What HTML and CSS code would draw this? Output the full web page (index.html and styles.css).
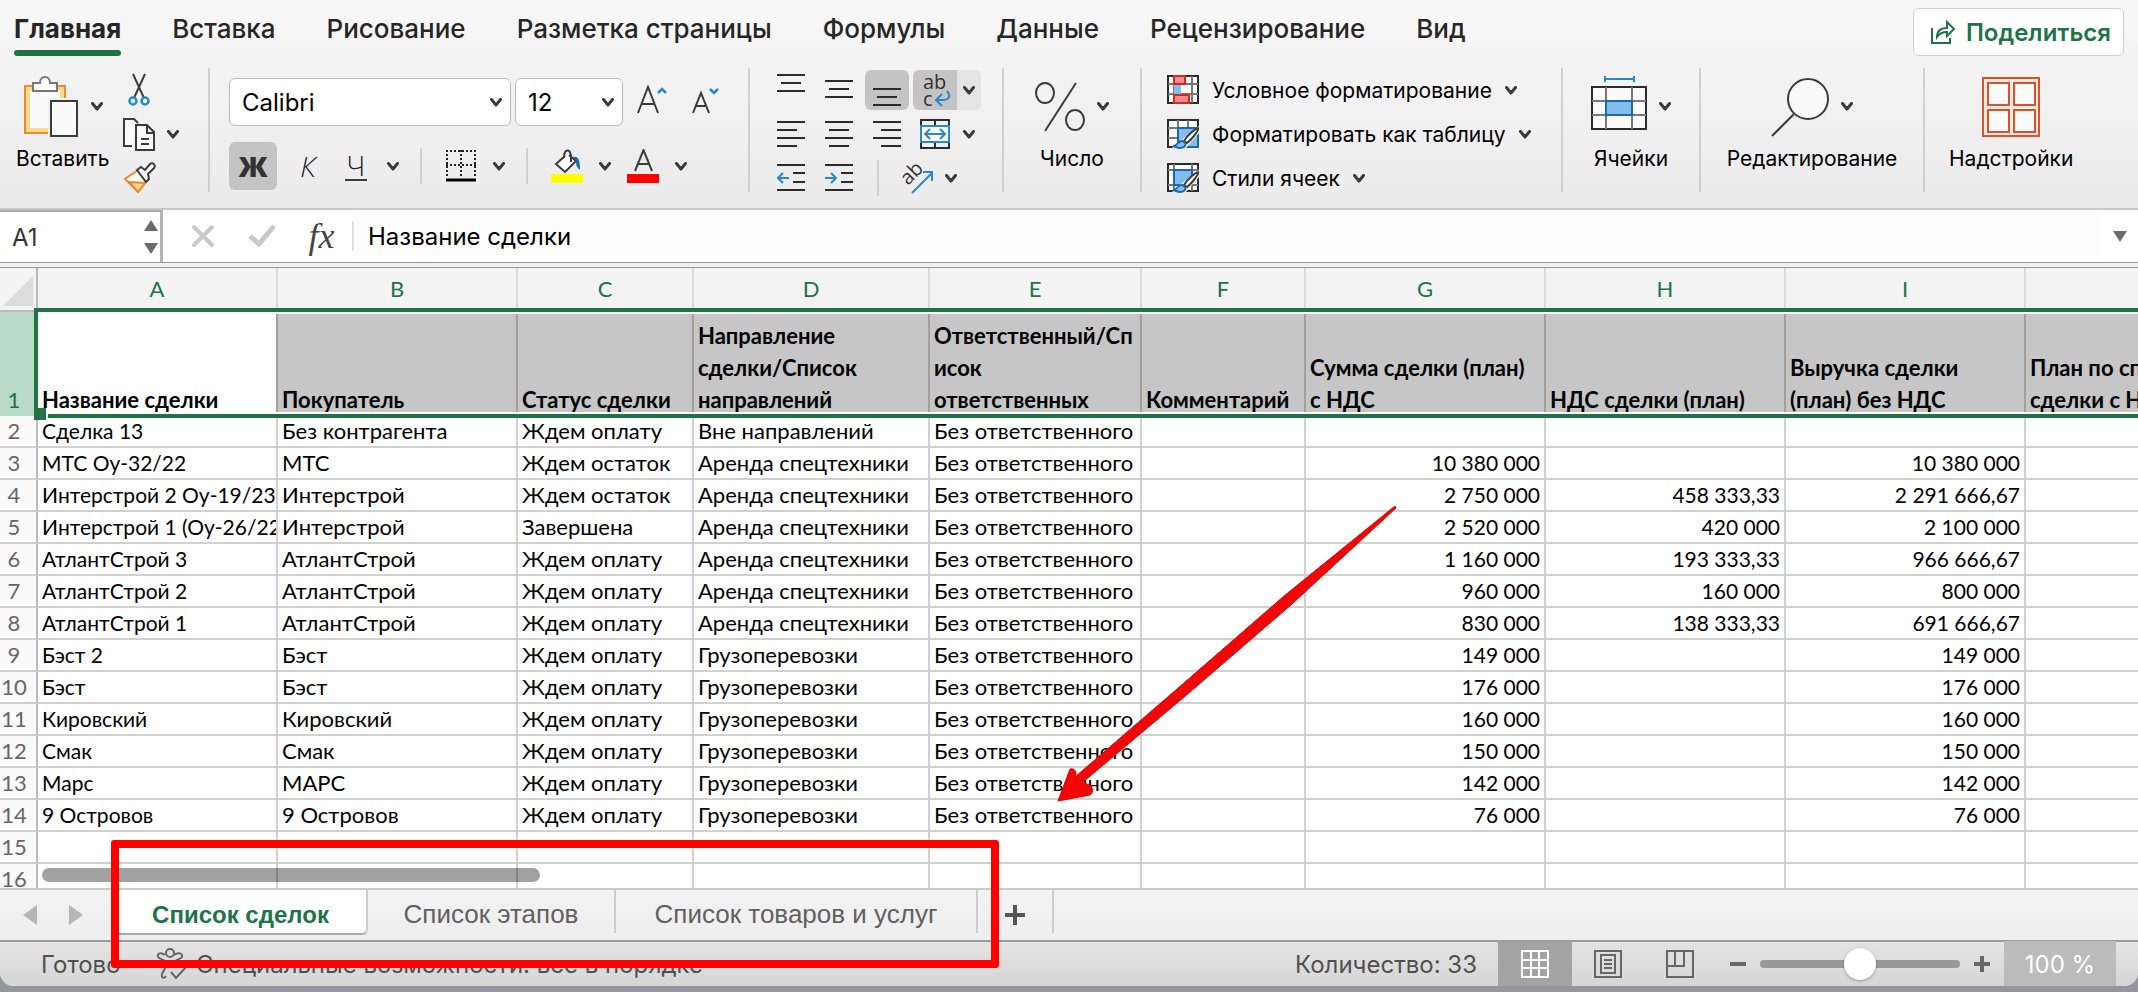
FILE: index.html
```html
<!DOCTYPE html>
<html lang="ru">
<head>
    <meta charset="UTF-8">
    <meta name="viewport" content="width=device-width, initial-scale=1.0">
    <title>Список сделок</title>
    <link rel="stylesheet" href="styles.css">
</head>
<body>
    <svg class="defs" aria-hidden="true">
        <symbol id="chevron" viewBox="0 0 12 9"><path d="M1.500 1.500 6 7l4.500-5.500" fill="none" stroke="#3b3b3b" stroke-width="3" stroke-linecap="round" stroke-linejoin="round"/></symbol>
    </svg>

    <div class="window">
        <nav class="menu">
            <a class="menu-item active" href="#">Главная</a>
            <a class="menu-item" href="#">Вставка</a>
            <a class="menu-item" href="#">Рисование</a>
            <a class="menu-item" href="#">Разметка страницы</a>
            <a class="menu-item" href="#">Формулы</a>
            <a class="menu-item" href="#">Данные</a>
            <a class="menu-item" href="#">Рецензирование</a>
            <a class="menu-item" href="#">Вид</a>
            <button class="share-btn">
                <svg width="26" height="26" viewBox="0 0 26 26" fill="none" stroke="#217346" stroke-width="2"><path d="M2 9v15h18v-5M7 18c0-6 4-9 10-9V3l7 7-7 7v-4c-5 0-8 2-10 5z"/></svg>
                Поделиться
            </button>
        </nav>

        <div class="ribbon">
            <div class="group group-clipboard">
                <button class="big-btn">
                    <span class="big-icon">
                        <svg width="56" height="62" viewBox="0 0 56 62">
                            <path d="M2 10h40v47H2z" fill="#fbd98d" stroke="#e88b35" stroke-width="2"/>
                            <path d="M7 15h30v37H7z" fill="#fafafa"/>
                            <path d="M25 22h31v40H25z" fill="#f1f1f1"/>
                            <path d="M10 15V7h7c0-8 10-8 10 0h7v8z" fill="#fff" stroke="#777" stroke-width="2"/>
                            <path d="M28 25h26v35H28z" fill="#fafafa" stroke="#3b3b3b" stroke-width="2"/>
                        </svg>
                        <svg class="chevron"><use href="#chevron"/></svg>
                    </span>
                    Вставить
                </button>
                <div class="rows">
                    <div class="row">
                        <button class="tool" title="Вырезать">
                            <svg width="34" height="34" viewBox="0 0 34 34" fill="none" stroke-width="2"><path d="M11 1l11 24M23 1L12 25" stroke="#3b3b3b"/><circle cx="11" cy="28" r="3.500" stroke="#2b88c8" stroke-width="2.500"/><circle cx="23" cy="28" r="3.500" stroke="#2b88c8" stroke-width="2.500"/></svg>
                        </button>
                    </div>
                    <div class="row">
                        <button class="tool" title="Копировать">
                            <svg width="34" height="34" viewBox="0 0 34 34" fill="#fafafa" stroke="#3b3b3b" stroke-width="2"><path d="M10 29H2V2h10l4 4"/><path d="M14 8h11l7 7v18H14zM25 8v8h7M19 22h8M19 27h8"/></svg>
                        </button>
                        <svg class="chevron"><use href="#chevron"/></svg>
                    </div>
                    <div class="row">
                        <button class="tool" title="Формат по образцу">
                            <svg width="34" height="34" viewBox="0 0 34 34" stroke-width="2"><path d="M16 9L3 18l13 13 10-13z" fill="#fff" stroke="#e88b35"/><path d="M7 21l16 1-7 9z" fill="#fbd98d" stroke="#e88b35"/><path d="M15 9l4-3 4 3 5-6c3-2 6 1 4 4l-6 6 1 5-3 3z" fill="#fff" stroke="#3b3b3b"/></svg>
                        </button>
                    </div>
                </div>
            </div>

            <div class="group group-font">
                <div class="font-row">
                    <span class="select select-font"><select aria-label="Шрифт"><option>Calibri</option></select><svg class="chevron"><use href="#chevron"/></svg></span>
                    <span class="select select-size"><select aria-label="Размер шрифта"><option>12</option></select><svg class="chevron"><use href="#chevron"/></svg></span>
                    <button class="size-btn" title="Увеличить размер шрифта">
                        <svg width="30" height="34" viewBox="0 0 30 34" fill="none" stroke-width="2"><path d="M1 28L11 2l10 26M5 19h12" stroke="#3b3b3b"/><path d="M21 8l4-4 4 4" stroke="#2b88c8" stroke-width="2.500"/></svg>
                    </button>
                    <button class="size-btn" title="Уменьшить размер шрифта">
                        <svg width="30" height="34" viewBox="0 0 30 34" fill="none" stroke-width="2"><path d="M2 28l8-20 8 20M5 21h10" stroke="#3b3b3b"/><path d="M19 4l4 4 4-4" stroke="#2b88c8" stroke-width="2.500"/></svg>
                    </button>
                </div>
                <div class="font-row font-style">
                    <button class="letter-btn bold-btn">Ж</button>
                    <button class="letter-btn italic-btn">К</button>
                    <button class="letter-btn"><span class="underlined">Ч</span></button>
                    <svg class="chevron"><use href="#chevron"/></svg>
                    <span class="divider"></span>
                    <button class="tool" title="Границы">
                        <svg width="30" height="32" viewBox="0 0 30 32" fill="none" stroke="#222" stroke-width="2"><path d="M0 1h30M0 15h30M1 0v28M15 0v28M29 0v28" stroke-dasharray="2 2"/><path d="M0 30h30" stroke="#000" stroke-width="3"/></svg>
                    </button>
                    <svg class="chevron"><use href="#chevron"/></svg>
                    <span class="divider"></span>
                    <button class="tool" title="Цвет заливки">
                        <svg width="32" height="34" viewBox="0 0 32 34"><path d="M0 25h32v9H0z" fill="#ff0"/><path d="M14 7L5 15l9 8 11-11-7-6" fill="#fafafa" stroke="#3b3b3b" stroke-width="2"/><path d="M13 9c0-10 7-10 7 0v4" fill="none" stroke="#3b3b3b" stroke-width="2"/><path d="M22 8c5-1 7 2 7 13-3-2-4-5-4-8z" fill="#1b68ad"/></svg>
                    </button>
                    <svg class="chevron"><use href="#chevron"/></svg>
                    <button class="tool" title="Цвет текста">
                        <svg width="32" height="34" viewBox="0 0 32 34"><path d="M0 25h32v9H0z" fill="red"/><path d="M8 22l8.500-21L25 22M11 15h11" fill="none" stroke="#3b3b3b" stroke-width="2"/></svg>
                    </button>
                    <svg class="chevron"><use href="#chevron"/></svg>
                </div>
            </div>

            <div class="group group-align">
                <div class="rows">
                    <div class="row">
                        <button class="align-btn" title="По верхнему краю"><svg width="28" height="36" viewBox="0 0 28 36" stroke="#2b2b2b" stroke-width="2"><path d="M0 3h28M4 11h20M0 19h28"/></svg></button>
                        <button class="align-btn" title="По середине"><svg width="28" height="36" viewBox="0 0 28 36" stroke="#2b2b2b" stroke-width="2"><path d="M0 9h28M4 17h20M0 25h28"/></svg></button>
                        <button class="align-btn pressed" title="По нижнему краю"><svg width="28" height="36" viewBox="0 0 28 36" stroke="#2b2b2b" stroke-width="2"><path d="M0 17h28M4 25h20M0 33h28"/></svg></button>
                        <span class="split">
                            <button class="align-btn wrap-btn" title="Перенос текста">
                                <span>ab<br>c</span>
                                <svg width="18" height="18" viewBox="0 0 18 18" fill="none" stroke="#2b88c8" stroke-width="2"><path d="M13 1c5 6 1 9-5 9H2M8 4l-6 6 6 6"/></svg>
                            </button>
                            <button class="arrow-btn" title="Ещё"><svg class="chevron"><use href="#chevron"/></svg></button>
                        </span>
                    </div>
                    <div class="row">
                        <button class="align-btn" title="По левому краю"><svg width="28" height="28" viewBox="0 0 28 28" stroke="#2b2b2b" stroke-width="2"><path d="M0 2h28M0 10h20M0 18h28M0 26h20"/></svg></button>
                        <button class="align-btn" title="По центру"><svg width="28" height="28" viewBox="0 0 28 28" stroke="#2b2b2b" stroke-width="2"><path d="M0 2h28M4 10h20M0 18h28M4 26h20"/></svg></button>
                        <button class="align-btn" title="По правому краю"><svg width="28" height="28" viewBox="0 0 28 28" stroke="#2b2b2b" stroke-width="2"><path d="M0 2h28M8 10h20M0 18h28M8 26h20"/></svg></button>
                        <span class="split">
                            <button class="align-btn" title="Объединить ячейки"><svg width="30" height="30" viewBox="0 0 30 30" fill="none" stroke-width="2"><path d="M1 1h28v28H1zM15 1v28" stroke="#2b2b2b"/><path d="M1 7h28v16H1z" fill="#fff" stroke="#2b88c8"/><path d="M5 15h20M10 10l-5 5 5 5M20 10l5 5-5 5" stroke="#2b88c8"/></svg></button>
                            <span class="arrow-btn"><svg class="chevron"><use href="#chevron"/></svg></span>
                        </span>
                    </div>
                    <div class="row">
                        <button class="align-btn" title="Уменьшить отступ"><svg width="28" height="28" viewBox="0 0 28 28" fill="none" stroke="#2b2b2b" stroke-width="2"><path d="M0 1h28M16 9h12M16 18h12M0 26h28"/><path d="M12 14H2M6 9l-5 5 5 5" stroke="#2b88c8"/></svg></button>
                        <button class="align-btn" title="Увеличить отступ"><svg width="28" height="28" viewBox="0 0 28 28" fill="none" stroke="#2b2b2b" stroke-width="2"><path d="M0 1h28M16 9h12M16 18h12M0 26h28"/><path d="M0 14h10M6 9l5 5-5 5" stroke="#2b88c8"/></svg></button>
                        <span class="divider"></span>
                        <span class="split">
                            <button class="align-btn" title="Ориентация"><svg width="34" height="34" viewBox="0 0 34 34" fill="none"><text class="angled" x="8" y="25" transform="rotate(-45 8 25)">ab</text><path d="M12 32l20-20M23 11h9v9" stroke="#2b88c8" stroke-width="2"/></svg></button>
                            <span class="arrow-btn"><svg class="chevron"><use href="#chevron"/></svg></span>
                        </span>
                    </div>
                </div>
            </div>

            <div class="group group-number">
                <button class="big-btn">
                    <span class="big-icon">
                        <svg width="50" height="52" viewBox="0 0 50 52" fill="none" stroke="#3b3b3b" stroke-width="2"><ellipse cx="10" cy="12" rx="9" ry="10"/><ellipse cx="40" cy="39" rx="9" ry="10"/><path d="M41 2L10 50"/></svg>
                        <svg class="chevron"><use href="#chevron"/></svg>
                    </span>
                    Число
                </button>
            </div>

            <div class="group group-styles">
                <div class="rows">
                    <button class="row style-btn">
                        <svg width="32" height="30" viewBox="0 0 32 30" fill="#fff" stroke-width="2"><path d="M1 1h30v27H1z" stroke="#2b2b2b"/><path d="M7 1v27M25 1v27M1 9h30M1 19h30" stroke="#777"/><path d="M7 10h7v9H7z" fill="#84bdec" stroke="none"/><path d="M7 1h11v8H7zM7 20h15v8H7z" fill="#ff8a8e" stroke="#cf2a22"/></svg>
                        Условное форматирование
                        <svg class="chevron"><use href="#chevron"/></svg>
                    </button>
                    <button class="row style-btn">
                        <svg width="32" height="30" viewBox="0 0 32 30" fill="#fff" stroke-width="2"><path d="M1 1h30v27H1z" stroke="#2b2b2b"/><path d="M11 1v27M21 1v27M1 9h30M1 19h30" stroke="#777"/><path d="M11 9h20v19H11z" fill="#84bdec" stroke="#1b68ad"/><path d="M32 7L14 21 5 29h14l13-15z" fill="#f6f6f6"/><path d="M32 9c-5 1-12 8-15 13l3 2c4-3 10-10 12-15z" stroke="#3b3b3b"/><path d="M6 27c5 0 4-5 9-5 5 1 5 7-3 7z" fill="#84bdec" stroke="#1b68ad"/></svg>
                        Форматировать как таблицу
                        <svg class="chevron"><use href="#chevron"/></svg>
                    </button>
                    <button class="row style-btn">
                        <svg width="32" height="30" viewBox="0 0 32 30" fill="#fff" stroke-width="2"><path d="M1 1h30v27H1z" stroke="#2b2b2b"/><path d="M7 1v27M25 1v27M1 7h30M1 22h30" stroke="#777"/><path d="M7 7h18v15H7z" fill="#84bdec" stroke="#1b68ad"/><path d="M32 7L14 21 5 29h14l13-15z" fill="#f6f6f6"/><path d="M32 9c-5 1-12 8-15 13l3 2c4-3 10-10 12-15z" stroke="#3b3b3b"/><path d="M6 27c5 0 4-5 9-5 5 1 5 7-3 7z" fill="#84bdec" stroke="#1b68ad"/></svg>
                        Стили ячеек
                        <svg class="chevron"><use href="#chevron"/></svg>
                    </button>
                </div>
            </div>

            <div class="group group-cells">
                <button class="big-btn">
                    <span class="big-icon">
                        <svg width="56" height="66" viewBox="0 0 56 66" fill="none" stroke-width="2"><path d="M14 5h29M14 2v6M43 2v6" stroke="#2b88c8"/><path d="M1 13h54v42H1z" fill="#fafafa" stroke="#2b2b2b"/><path d="M15 13v42M41 13v42M1 27h54M1 41h54" stroke="#777"/><path d="M15 27h26v14H15z" fill="#84bdec" stroke="#1b68ad"/></svg>
                        <svg class="chevron"><use href="#chevron"/></svg>
                    </span>
                    Ячейки
                </button>
            </div>

            <div class="group group-edit">
                <button class="big-btn">
                    <span class="big-icon">
                        <svg width="58" height="60" viewBox="0 0 58 60" fill="none" stroke="#3b3b3b" stroke-width="2"><circle cx="37" cy="22" r="20" fill="#fafafa"/><path d="M23 37L1 59"/></svg>
                        <svg class="chevron"><use href="#chevron"/></svg>
                    </span>
                    Редактирование
                </button>
            </div>

            <div class="group group-addins">
                <button class="big-btn">
                    <span class="big-icon">
                        <svg width="58" height="60" viewBox="0 0 58 60" fill="#fafafa" stroke="#d9512c" stroke-width="2"><path d="M1 1h56v58H1z" fill="#fdeae3"/><path d="M6 6h21v22H6zM32 6h21v22H32zM6 33h21v22H6zM32 33h21v22H32z"/></svg>
                    </span>
                    Надстройки
                </button>
            </div>
        </div>

        <div class="formula-bar">
            <div class="name-box">
                <input type="text" value="A1" aria-label="Имя ячейки">
                <svg width="14" height="34" viewBox="0 0 14 34" fill="#6b6b6b"><path d="M7 0l7 11H0zM0 23h14l-7 11z"/></svg>
            </div>
            <button class="formula-btn" title="Отмена"><svg width="24" height="24" viewBox="0 0 24 24" stroke="#c8c8c8" stroke-width="4" stroke-linecap="round"><path d="M3 3l18 18M21 3L3 21"/></svg></button>
            <button class="formula-btn" title="Ввод"><svg width="28" height="24" viewBox="0 0 28 24" fill="none" stroke="#c8c8c8" stroke-width="5"><path d="M2 12l9 8L26 2"/></svg></button>
            <button class="formula-btn fx">fx</button>
            <input class="formula-input" type="text" value="Название сделки" aria-label="Строка формул">
            <button class="formula-expand" title="Развернуть"><svg width="14" height="11" viewBox="0 0 14 11" fill="#6b6b6b"><path d="M0 0h14L7 11z"/></svg></button>
        </div>

        <div class="grid">
            <table>
                <colgroup>
                    <col class="col-num"><col class="col-wide"><col class="col-wide"><col class="col-c"><col class="col-d"><col class="col-e"><col class="col-f"><col class="col-wide"><col class="col-wide"><col class="col-wide"><col class="col-wide">
                </colgroup>
                <thead>
                    <tr>
                        <th class="corner"><svg width="30" height="30" viewBox="0 0 30 30" fill="#dcdcdc"><path d="M30 0v30H0z"/></svg></th>
                        <th>A</th><th>B</th><th>C</th><th>D</th><th>E</th><th>F</th><th>G</th><th>H</th><th>I</th><th>J</th>
                    </tr>
                </thead>
                <tbody>
                    <tr class="head-row">
                        <th>1</th>
                        <td>Название сделки</td><td>Покупатель</td><td>Статус сделки</td><td>Направление<br>сделки/Список<br>направлений</td><td>Ответственный/Сп<br>исок<br>ответственных</td><td>Комментарий</td><td>Сумма сделки (план)<br>с НДС</td><td>НДС сделки (план)</td><td>Выручка сделки<br>(план) без НДС</td><td>План по списанию<br>сделки с НДС</td>
                    </tr>
                    <tr><th>2</th><td>Сделка 13</td><td>Без контрагента</td><td>Ждем оплату</td><td>Вне направлений</td><td>Без ответственного</td><td></td><td></td><td></td><td></td><td></td></tr>
                    <tr><th>3</th><td>МТС Оу-32/22</td><td>МТС</td><td>Ждем остаток</td><td>Аренда спецтехники</td><td>Без ответственного</td><td></td><td class="num">10 380 000</td><td></td><td class="num">10 380 000</td><td></td></tr>
                    <tr><th>4</th><td>Интерстрой 2 Оу-19/23</td><td>Интерстрой</td><td>Ждем остаток</td><td>Аренда спецтехники</td><td>Без ответственного</td><td></td><td class="num">2 750 000</td><td class="num">458 333,33</td><td class="num">2 291 666,67</td><td></td></tr>
                    <tr><th>5</th><td>Интерстрой 1 (Оу-26/22)</td><td>Интерстрой</td><td>Завершена</td><td>Аренда спецтехники</td><td>Без ответственного</td><td></td><td class="num">2 520 000</td><td class="num">420 000</td><td class="num">2 100 000</td><td></td></tr>
                    <tr><th>6</th><td>АтлантСтрой 3</td><td>АтлантСтрой</td><td>Ждем оплату</td><td>Аренда спецтехники</td><td>Без ответственного</td><td></td><td class="num">1 160 000</td><td class="num">193 333,33</td><td class="num">966 666,67</td><td></td></tr>
                    <tr><th>7</th><td>АтлантСтрой 2</td><td>АтлантСтрой</td><td>Ждем оплату</td><td>Аренда спецтехники</td><td>Без ответственного</td><td></td><td class="num">960 000</td><td class="num">160 000</td><td class="num">800 000</td><td></td></tr>
                    <tr><th>8</th><td>АтлантСтрой 1</td><td>АтлантСтрой</td><td>Ждем оплату</td><td>Аренда спецтехники</td><td>Без ответственного</td><td></td><td class="num">830 000</td><td class="num">138 333,33</td><td class="num">691 666,67</td><td></td></tr>
                    <tr><th>9</th><td>Бэст 2</td><td>Бэст</td><td>Ждем оплату</td><td>Грузоперевозки</td><td>Без ответственного</td><td></td><td class="num">149 000</td><td></td><td class="num">149 000</td><td></td></tr>
                    <tr><th>10</th><td>Бэст</td><td>Бэст</td><td>Ждем оплату</td><td>Грузоперевозки</td><td>Без ответственного</td><td></td><td class="num">176 000</td><td></td><td class="num">176 000</td><td></td></tr>
                    <tr><th>11</th><td>Кировский</td><td>Кировский</td><td>Ждем оплату</td><td>Грузоперевозки</td><td>Без ответственного</td><td></td><td class="num">160 000</td><td></td><td class="num">160 000</td><td></td></tr>
                    <tr><th>12</th><td>Смак</td><td>Смак</td><td>Ждем оплату</td><td>Грузоперевозки</td><td>Без ответственного</td><td></td><td class="num">150 000</td><td></td><td class="num">150 000</td><td></td></tr>
                    <tr><th>13</th><td>Марс</td><td>МАРС</td><td>Ждем оплату</td><td>Грузоперевозки</td><td>Без ответственного</td><td></td><td class="num">142 000</td><td></td><td class="num">142 000</td><td></td></tr>
                    <tr><th>14</th><td>9 Островов</td><td>9 Островов</td><td>Ждем оплату</td><td>Грузоперевозки</td><td>Без ответственного</td><td></td><td class="num">76 000</td><td></td><td class="num">76 000</td><td></td></tr>
                    <tr><th>15</th><td></td><td></td><td></td><td></td><td></td><td></td><td></td><td></td><td></td><td></td></tr>
                    <tr><th>16</th><td></td><td></td><td></td><td></td><td></td><td></td><td></td><td></td><td></td><td></td></tr>
                </tbody>
            </table>
            <div class="selection"></div>
            <div class="scrollbar"></div>
        </div>

        <div class="sheets">
            <button class="sheet-nav" title="Назад"><svg width="14" height="20" viewBox="0 0 14 20" fill="#b5b5b5"><path d="M14 0v20L0 10z"/></svg></button>
            <button class="sheet-nav" title="Вперёд"><svg width="14" height="20" viewBox="0 0 14 20" fill="#b5b5b5"><path d="M0 0v20l14-10z"/></svg></button>
            <button class="sheet active">Список сделок</button>
            <button class="sheet">Список этапов</button>
            <button class="sheet sheet-long">Список товаров и услуг</button>
            <button class="sheet sheet-add" title="Добавить лист"><svg width="20" height="20" viewBox="0 0 20 20" stroke="#555" stroke-width="4"><path d="M10 0v20M0 10h20"/></svg></button>
        </div>

        <footer class="status">
            <span class="ready">Готово</span>
            <svg class="access" width="32" height="32" viewBox="0 0 32 32" fill="none" stroke="#666" stroke-width="2"><circle cx="14" cy="5" r="4"/><path d="M9 7C5 4 1 5 2 9c2 3 7 2 7 5v6l-3 6c-1 4 2 5 4 2M18 7c4-3 9-2 8 2-2 3-7 2-7 5v4M15 24l5 6 10-11"/></svg>
            <span>Специальные возможности: все в порядке</span>
            <span class="count">Количество: 33</span>
            <button class="view-btn active" title="Обычный"><svg width="28" height="28" viewBox="0 0 28 28" fill="none" stroke="#fff" stroke-width="2"><path d="M1 1h26v26H1zM10 1v26M18 1v26M1 10h26M1 18h26"/></svg></button>
            <button class="view-btn" title="Разметка страницы"><svg width="28" height="28" viewBox="0 0 28 28" fill="none" stroke="#666" stroke-width="2"><path d="M1 1h26v26H1zM7 5h14v18H7zM10 10h8M10 14h8M10 18h8"/></svg></button>
            <button class="view-btn" title="Страничный режим"><svg width="28" height="28" viewBox="0 0 28 28" fill="none" stroke="#666" stroke-width="2"><path d="M1 1h26v26H1zM9 1v15M18 1v15H1"/></svg></button>
            <button class="zoom-btn" title="Уменьшить"><svg width="16" height="16" viewBox="0 0 16 16" stroke="#666" stroke-width="4"><path d="M0 8h16"/></svg></button>
            <input class="zoom" type="range" min="0" max="200" value="100" aria-label="Масштаб">
            <button class="zoom-btn" title="Увеличить"><svg width="16" height="16" viewBox="0 0 16 16" stroke="#666" stroke-width="4"><path d="M0 8h16M8 0v16"/></svg></button>
            <button class="percent">100 %</button>
        </footer>
    </div>

    <!-- выделение вкладок и стрелка -->
    <div class="mark"></div>
    <svg class="arrow" width="340" height="296" viewBox="0 0 340 296"><path d="M338 0L227 90 120 183l-102 88 1-4q-1-5-6-4L1 295l32-6q5-4 1-9l-8-4 107-90L235 98 339 2z" fill="#f00808" stroke="#d80000" stroke-width="1"/></svg>
</body>
</html>
```

FILE: styles.css
```css
* {
    box-sizing: border-box;
}

body {
    margin: 0;
    height: 100vh;
    padding-bottom: 6px;
    background: #94959d;
    font-family: Inter, Roboto, sans-serif;
    font-size: 21px;
    color: #000;
    overflow: hidden;
}

button {
    display: flex;
    align-items: center;
    justify-content: center;
    padding: 0;
    border: none;
    background: none;
    font: inherit;
    color: inherit;
    cursor: pointer;
}

svg {
    display: block;
    flex: none;
}

.defs {
    position: absolute;
    width: 0;
    height: 0;
}

.chevron {
    width: 12px;
    height: 9px;
}

.window {
    display: flex;
    flex-direction: column;
    height: 100%;
    background: #f1f1f1;
    border-radius: 0 0 14px 14px;
    overflow: hidden;
}

/* меню */
.menu {
    display: flex;
    align-items: flex-start;
    gap: 51px;
    height: 68px;
    padding: 8px 14px;
    background: linear-gradient(#f8f8f8, #f3f3f3);
}

.menu-item {
    height: 48px;
    padding-top: 4px;
    font-size: 26px;
    font-weight: 500;
    line-height: 34px;
    color: #262626;
    text-decoration: none;
    white-space: nowrap;
}

.menu-item.active {
    font-weight: 700;
    position: relative;
}

.menu-item.active::after {
    content: "";
    position: absolute;
    left: 0;
    right: 0;
    bottom: 0;
    height: 6px;
    border-radius: 3px;
    background: #217346;
}

.share-btn {
    gap: 10px;
    height: 48px;
    margin-left: auto;
    padding: 0 12px 0 16px;
    border: 1px solid #cfcfcf;
    border-radius: 6px;
    background: #fff;
    color: #217346;
    font-size: 24px;
    font-weight: 600;
}

/* лента */
.ribbon {
    display: flex;
    height: 142px;
    padding-bottom: 16px;
    border-bottom: 2px solid #c8c8c8;
    background: linear-gradient(#f3f3f3, #ebebeb);
}

.group {
    display: flex;
    flex: none;
    border-right: 2px solid #d0d0d0;
}

.group-clipboard {
    width: 210px;
    padding-left: 16px;
    gap: 12px;
}

.group-font {
    flex-direction: column;
    gap: 16px;
    width: 540px;
    padding: 10px 0 0 19px;
}

.group-align {
    width: 254px;
    padding-left: 19px;
}

.group-number,
.group-cells {
    width: 138px;
    justify-content: center;
}

.group-styles {
    width: 421px;
    padding-left: 25px;
}

.group-edit {
    width: 224px;
    justify-content: center;
}

.group-addins {
    padding-left: 24px;
    border-right: none;
}

.big-btn {
    flex-direction: column;
    justify-content: flex-start;
    line-height: 28px;
}

.big-icon {
    display: flex;
    align-items: center;
    gap: 12px;
    height: 77px;
}

.rows {
    display: flex;
    flex-direction: column;
    align-items: flex-start;
}

.row {
    display: flex;
    flex: none;
    align-items: center;
    gap: 4px;
    height: 44px;
}

.tool {
    width: 36px;
    height: 44px;
}

.group-clipboard .row {
    gap: 10px;
}

.font-row {
    display: flex;
    align-items: center;
    gap: 4px;
    height: 48px;
}

.font-style {
    gap: 14px;
}

.select {
    position: relative;
}

.select select {
    appearance: none;
    width: 100%;
    height: 48px;
    padding: 0 12px;
    border: 1px solid #bdbdbd;
    border-radius: 6px;
    background: #fff;
    font: inherit;
    font-size: 24px;
    color: #000;
}

.select .chevron {
    position: absolute;
    right: 9px;
    top: 20px;
}

.select-font {
    width: 282px;
}

.select-size {
    width: 108px;
}

.size-btn {
    width: 50px;
}

.letter-btn {
    width: 34px;
    height: 48px;
    font-family: "Open Sans", sans-serif;
    font-size: 28px;
    font-weight: 300;
    color: #222;
}

.bold-btn {
    width: 48px;
    border-radius: 6px;
    background: #c4c4c4;
    font-weight: 800;
    color: #333;
}

.italic-btn {
    font-style: italic;
}

.underlined {
    padding: 0 2px;
    border-bottom: 2px solid #3b3b3b;
    line-height: 28px;
}

.divider {
    width: 2px;
    height: 36px;
    margin: 0 7px;
    background: #d0d0d0;
}

.group-align .divider {
    margin: 0 12px;
}

.align-btn {
    width: 44px;
    height: 40px;
}

.pressed {
    border-radius: 6px;
    background: #c4c4c4;
}

.split {
    display: flex;
}

.arrow-btn {
    display: flex;
    align-items: center;
    justify-content: center;
    width: 24px;
    height: 40px;
}

.wrap-btn {
    position: relative;
    justify-content: flex-start;
    padding-left: 10px;
    border-radius: 6px 0 0 6px;
    background: #c4c4c4;
    font-family: "Open Sans", sans-serif;
    font-size: 20px;
    line-height: 17px;
    text-align: left;
    color: #333;
}

.wrap-btn svg {
    position: absolute;
    right: 5px;
    bottom: 2px;
}

.wrap-btn + .arrow-btn {
    border-radius: 0 6px 6px 0;
    background: #e4e4e4;
}

.angled {
    font-family: "Open Sans", sans-serif;
    font-size: 20px;
    fill: #333;
}

.style-btn {
    gap: 13px;
    white-space: nowrap;
}

/* строка формул */
.formula-bar {
    display: flex;
    align-items: center;
    height: 53px;
    border-bottom: 1px solid #999;
    background: #fff;
}

.name-box {
    display: flex;
    align-items: center;
    width: 163px;
    height: 52px;
    padding: 0 2px 0 12px;
    border-top: 2px solid #ababab;
    border-right: 3px solid #b5b5b5;
}

.name-box input {
    flex: 1;
    min-width: 0;
    padding: 0;
    border: none;
    font: inherit;
    font-size: 24px;
    color: #333;
}

.formula-btn {
    width: 59px;
    height: 52px;
    padding-left: 20px;
}

.fx {
    padding-left: 10px;
    border-right: 2px solid #e0e0e0;
    height: 30px;
    width: 73px;
    font-family: "Liberation Serif", serif;
    font-size: 36px;
    font-style: italic;
    color: #444;
}

.formula-input {
    flex: 1;
    min-width: 0;
    height: 44px;
    padding: 0 14px;
    border: none;
    background: #fdfdfd;
    font: inherit;
    font-size: 24px;
    color: #000;
}

.formula-expand {
    width: 36px;
    height: 52px;
}

/* таблица */
.grid {
    position: relative;
    flex: 1;
    min-height: 0;
    margin-top: 4px;
    border-top: 1px solid #999;
    background: #fff;
    overflow: hidden;
}

table {
    width: 2266px;
    table-layout: fixed;
    border-collapse: separate;
    border-spacing: 0;
    font-family: Lato, "Open Sans", sans-serif;
    font-size: 22px;
    line-height: 30px;
}

.col-num {
    width: 38px;
}

.col-wide {
    width: 240px;
}

.col-c {
    width: 176px;
}

.col-d {
    width: 236px;
}

.col-e {
    width: 212px;
}

.col-f {
    width: 164px;
}

th,
td {
    height: 32px;
    padding: 0 0 0 4px;
    border-right: 2px solid #d0d0d0;
    border-bottom: 2px solid #d0d0d0;
    text-align: left;
    white-space: nowrap;
    overflow: hidden;
}

th {
    font-weight: 400;
    text-align: center;
}

th + td {
    font-size: 21px;
}

thead th {
    height: 44px;
    padding: 0;
    border-right-color: #dcdcdc;
    border-bottom-color: #217346;
    background: #f3f3f3;
    color: #217346;
}

thead .corner {
    padding: 4px 0 0 3px;
    border-color: #bbb;
}

tbody th {
    padding: 0 8px 0 0;
    border-right-color: #bbb;
    background: #fafafa;
    color: #666;
}

.num {
    padding-right: 4px;
    font-size: 21px;
    text-align: right;
}

.head-row td,
.head-row th {
    height: 104px;
    border-bottom: none;
    vertical-align: bottom;
    font-size: 22px;
    line-height: 32px;
}

.head-row td {
    border-right-color: #a0a0a0;
    background: #c6c6c6;
    font-weight: 700;
}

.head-row th + td {
    background: #fff;
}

.head-row th {
    background: #b8dac7;
    color: #217346;
}

.selection {
    position: absolute;
    top: 40px;
    left: 34px;
    right: -10px;
    height: 110px;
    border: 4px solid #217346;
    box-shadow: inset 0 2px #fff, inset 0 -2px #fff;
}

.selection::after {
    content: "";
    position: absolute;
    left: -4px;
    bottom: -6px;
    width: 12px;
    height: 12px;
    border-right: 2px solid #fff;
    background: #217346;
}

.scrollbar {
    position: absolute;
    left: 42px;
    bottom: 6px;
    width: 498px;
    height: 14px;
    border-radius: 7px;
    background: rgba(0, 0, 0, 0.370);
}

/* листы */
.sheets {
    display: flex;
    height: 52px;
    padding-left: 23px;
    border-top: 2px solid #cbcbcb;
    background: linear-gradient(#f2f2f2, #eee);
    font-family: "Liberation Sans", sans-serif;
    font-size: 26px;
    color: #616161;
}

.sheet-nav {
    width: 46px;
    height: 50px;
    justify-content: flex-start;
}

.sheet {
    width: 248px;
    height: 43px;
    padding-top: 6px;
    border-right: 2px solid #ccc;
    white-space: nowrap;
}

.sheet.active {
    width: 253px;
    height: 45px;
    border-bottom: 2px solid #aaa;
    border-radius: 0 0 6px 6px;
    background: #fff;
    color: #217346;
    font-size: 24px;
    font-weight: 700;
}

.sheet-long {
    width: 362px;
}

.sheet-add {
    width: 76px;
}

/* строка состояния */
.status {
    display: flex;
    align-items: center;
    height: 46px;
    padding: 0 22px 0 41px;
    border-top: 2px solid #9d9d9d;
    background: linear-gradient(#e3e3e3, #d6d6d6);
    font-size: 24px;
    color: #505050;
    white-space: nowrap;
}

.ready {
    width: 115px;
}

.access {
    margin-right: 8px;
}

.count {
    margin-left: auto;
    margin-right: 21px;
}

.view-btn {
    width: 72px;
    height: 44px;
}

.view-btn.active {
    width: 74px;
    background: #a3a3a3;
}

.zoom-btn {
    width: 44px;
    height: 44px;
}

.zoom {
    appearance: none;
    width: 200px;
    height: 32px;
    margin: 0;
    background: none;
}

.zoom::-webkit-slider-runnable-track {
    height: 8px;
    border-radius: 4px;
    background: #999;
}

.zoom::-webkit-slider-thumb {
    appearance: none;
    width: 32px;
    height: 32px;
    margin-top: -12px;
    border-radius: 50%;
    background: #fff;
    box-shadow: 0 1px 3px rgba(0, 0, 0, 0.300);
}

.percent {
    width: 112px;
    height: 46px;
    background: #bbb;
    color: #fff;
}

/* пометки поверх окна */
.mark {
    position: absolute;
    left: 111px;
    top: 840px;
    width: 888px;
    height: 128px;
    border: 8px solid #f00;
    border-radius: 3px;
}

.arrow {
    position: absolute;
    left: 1057px;
    top: 506px;
}
```
